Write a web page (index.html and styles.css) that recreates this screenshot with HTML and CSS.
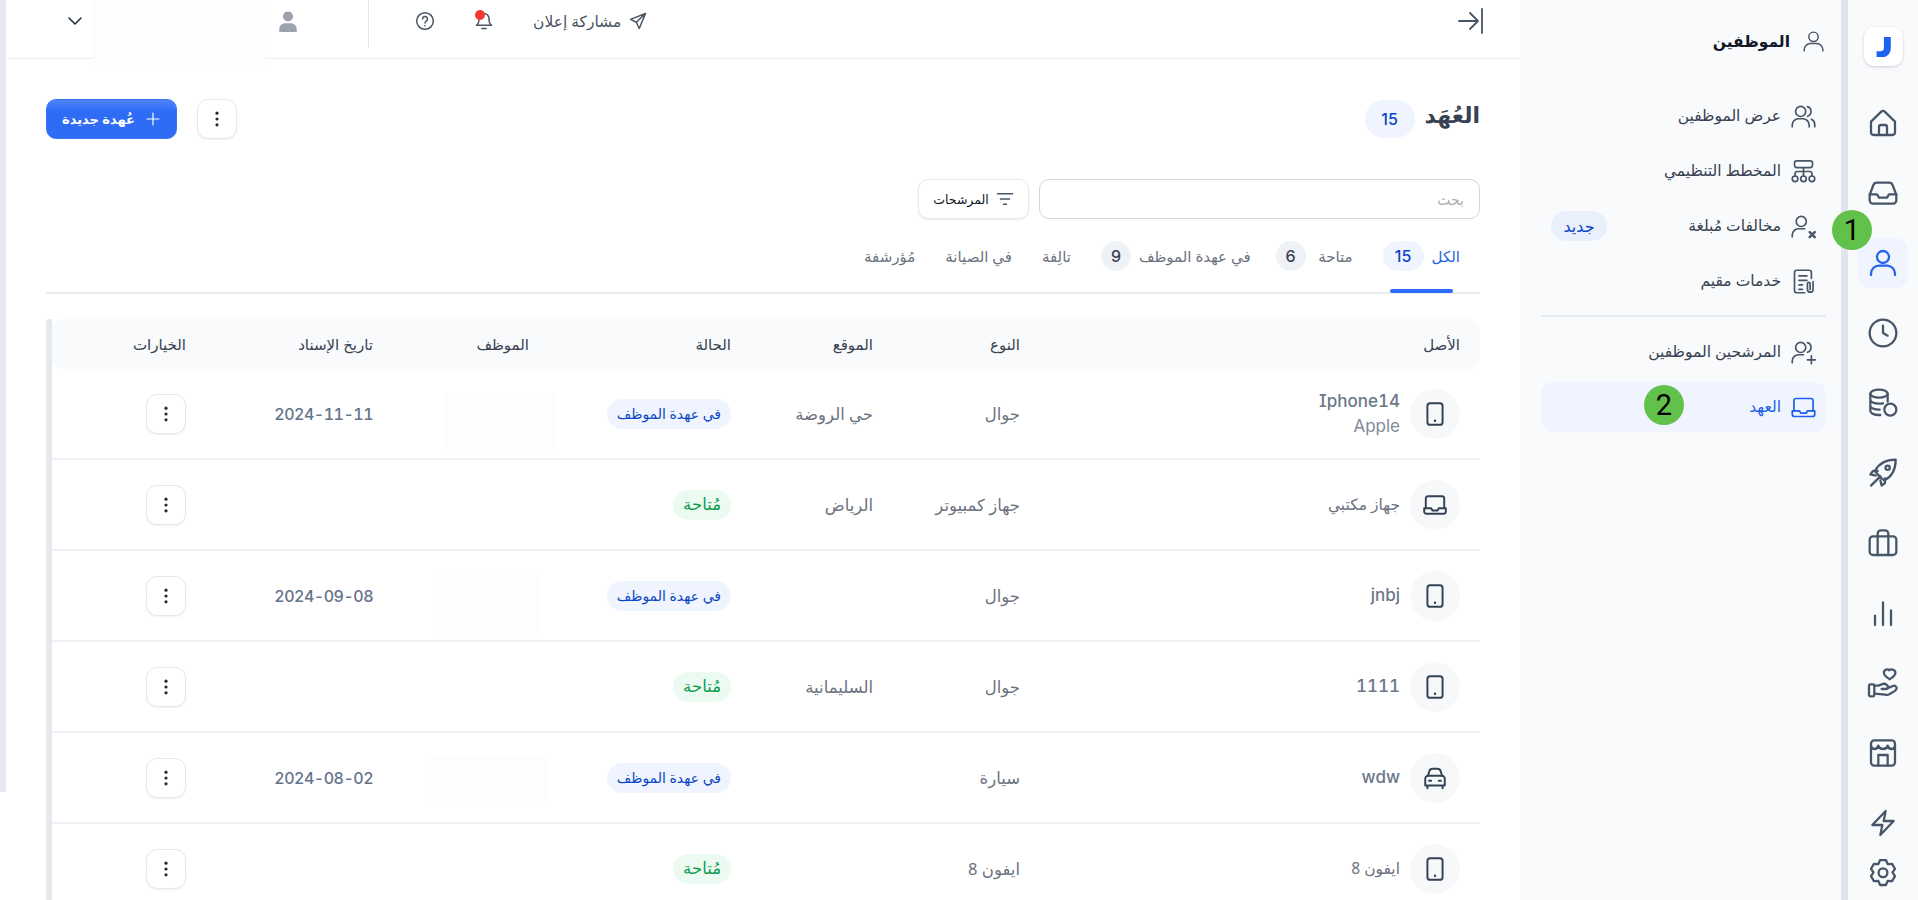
FILE: index.html
```html
<!DOCTYPE html>
<html lang="ar" dir="rtl">
<head>
<meta charset="utf-8">
<title>العهد</title>
<link rel="stylesheet" href="styles.css">
</head>
<body>
<svg class="sprite" xmlns="http://www.w3.org/2000/svg">
  <symbol id="i-user" viewBox="0 0 24 24"><circle cx="12" cy="7.5" r="4.5"/><path d="M3 21v-1a6 6 0 0 1 6-6h6a6 6 0 0 1 6 6v1"/></symbol>
  <symbol id="i-users" viewBox="0 0 24 24"><circle cx="9.5" cy="7.5" r="4.5"/><path d="M2 21v-1.500a5.500 5.500 0 0 1 5.500-5.500h4a5.500 5.500 0 0 1 5.500 5.500V21M15.500 3.200a4.500 4.500 0 0 1 0 8.600M19 14.500a5 5 0 0 1 3 4.500v2"/></symbol>
  <symbol id="i-org" viewBox="0 0 24 24"><rect x="4" y="2.500" width="16" height="6" rx="2"/><path d="M12 8.500v7M4.500 16v-2a2 2 0 0 1 2-2h11a2 2 0 0 1 2 2v2"/><circle cx="4.500" cy="18.500" r="2.500"/><circle cx="12" cy="18.500" r="2.500"/><circle cx="19.500" cy="18.500" r="2.500"/></symbol>
  <symbol id="i-userx" viewBox="0 0 24 24"><circle cx="10" cy="7.500" r="4.500"/><path d="M2 21v-1.500a5.500 5.500 0 0 1 5.500-5.500h5.500"/><path d="M17.500 17l4.500 4.500M22 17l-4.500 4.500" stroke-width="2.200"/></symbol>
  <symbol id="i-userp" viewBox="0 0 24 24"><circle cx="9.500" cy="7.500" r="4.500"/><path d="M2 21v-1.500a5.500 5.500 0 0 1 5.500-5.500h4.500M15.500 3.200a4.500 4.500 0 0 1 0 8.600M19 15v7M15.500 18.500h7"/></symbol>
  <symbol id="i-doc" viewBox="0 0 24 24"><path d="M13 22H6a2 2 0 0 1-2-2V4a2 2 0 0 1 2-2h11a2 2 0 0 1 2 2v5M8 7h7M8 11h7M8 15h3M8 19h3"/><path d="M20.500 12v7a2.500 2.500 0 0 1-5 0v-5a1.200 1.200 0 0 1 2.400 0v5"/></symbol>
  <symbol id="i-laptop" viewBox="0 0 24 24"><path d="M3.500 15V6a2 2 0 0 1 2-2h13a2 2 0 0 1 2 2v9"/><path d="M2 15h6.500l1 2h5l1-2H22v3a2 2 0 0 1-2 2H4a2 2 0 0 1-2-2z"/></symbol>
  <symbol id="i-home" viewBox="0 0 24 24"><path d="M3 11l7.700-7.500a1.900 1.900 0 0 1 2.600 0L21 11v8a2 2 0 0 1-2 2H5a2 2 0 0 1-2-2z"/><path d="M9 21v-6a1.500 1.500 0 0 1 1.500-1.500h3A1.500 1.500 0 0 1 15 15v6"/></symbol>
  <symbol id="i-inbox" viewBox="0 0 24 24"><path d="M2 13.500l2.700-7.300A3 3 0 0 1 7.500 4.200h9a3 3 0 0 1 2.800 2l2.700 7.300v4a2.500 2.500 0 0 1-2.500 2.500h-15A2.500 2.500 0 0 1 2 17.500z"/><path d="M2 13h5.500l1.500 2.500h6l1.500-2.500H22"/></symbol>
  <symbol id="i-clock" viewBox="0 0 24 24"><circle cx="12" cy="12" r="10"/><path d="M12 6.500V12l3.500 2"/></symbol>
  <symbol id="i-coins" viewBox="0 0 24 24"><ellipse cx="9" cy="5" rx="6.500" ry="3"/><path d="M2.500 5v13c0 1.700 2.900 3 6.500 3h1M15.500 5v6M2.500 9.500c0 1.700 2.900 3 6.500 3 1 0 2-.1 3-.3M2.500 14c0 1.700 2.900 3 6.500 3h.5"/><circle cx="17.500" cy="17" r="4.500"/></symbol>
  <symbol id="i-rocket" viewBox="0 0 24 24"><path d="M7.500 12.500L6 10.500c3-6 8-8.500 15.500-8.500 0 7.500-2.500 12.500-8.500 15.500l-2-1.500z"/><path d="M8 10.500H4.500L2.500 13l4 1M13.500 16v3.500L11 21.500l-1-4M3 21.500l7-7"/><circle cx="15.500" cy="8" r="1.600"/></symbol>
  <symbol id="i-case" viewBox="0 0 24 24"><rect x="2" y="7" width="20" height="14" rx="2.500"/><path d="M8 7V5a2.500 2.500 0 0 1 2.500-2.500h3A2.500 2.500 0 0 1 16 5v2M8 7v14M16 7v14"/></symbol>
  <symbol id="i-chart" viewBox="0 0 24 24"><path d="M6 21v-7M12 21V4M18 21V10"/></symbol>
  <symbol id="i-hand" viewBox="0 0 24 24"><path d="M16.500 2.500c1-1.200 4.800-.9 4.800 2 0 2-2.500 3.500-4.300 4.700-1.800-1.200-4.300-2.700-4.300-4.700 0-2.900 2.800-3.200 3.800-2z"/><rect x="1.500" y="13" width="4" height="9" rx="1"/><path d="M5.500 14h3l3.500-1.300c1-.3 2 0 2.700.7l1 1c.7 1-.2 2.200-1.300 2.100H11M15 16l4.500-1.800c1.500-.6 3 .7 2.700 2-.2.900-.7 1.400-1.500 1.900l-4 2.300c-1 .5-2 .6-3 .3L5.500 20"/></symbol>
  <symbol id="i-store" viewBox="0 0 24 24"><rect x="3" y="2.500" width="18" height="19" rx="2.500"/><path d="M3 6.500c.4 1.600 1.200 2.500 2.500 2.500S8.100 8 8.500 6.500C8.900 8 10.200 9 12 9s3.100-1 3.500-2.500c.4 1.500 1.700 2.500 3 2.500s2.100-.9 2.500-2.500M8.500 21.500V13.500h7v8"/></symbol>
  <symbol id="i-bolt" viewBox="0 0 24 24"><path d="M14 3L4 13.500h7.500L10 21l10-10.500h-7.500z"/></symbol>
  <symbol id="i-gear" viewBox="0 0 24 24"><path d="M9.800 2.300h4.400l1.300 3 3.300-.2 2.200 3.800-1.900 2.700 1.900 2.700-2.200 3.800-3.300-.2-1.300 3.100H9.800l-1.300-3.100-3.300.2L3 14.300 4.900 11.600 3 8.900l2.200-3.800 3.300.2z"/><circle cx="12" cy="11.800" r="3.300"/></symbol>
  <symbol id="i-phone" viewBox="0 0 24 24"><rect x="5" y="2" width="14" height="20" rx="2.500"/><path d="M12 18.200v.1" stroke-width="2.200"/></symbol>
  <symbol id="i-car" viewBox="0 0 24 24"><path d="M5.500 10l1.300-4.500A3 3 0 0 1 9.600 3.500h4.800a3 3 0 0 1 2.800 2L18.500 10"/><path d="M3 12.500A2.500 2.500 0 0 1 5.500 10h13a2.500 2.500 0 0 1 2.500 2.500V19H3zM5 19v2.500M19 19v2.500M6.500 14.500h2M15.500 14.500h2"/></symbol>
  <symbol id="i-dots" viewBox="0 0 24 24"><circle cx="12" cy="5" r="1.900"/><circle cx="12" cy="12" r="1.900"/><circle cx="12" cy="19" r="1.900"/></symbol>
</svg>

<div class="page">
  <nav class="rail">
    <div class="logo"><svg viewBox="0 0 24 24" class="logo-j"><path d="M13 1h7.500v12c0 5.500-3.500 10-9 10H5v-6.500h4c3 0 4-1.500 4-4z"/></svg></div>
    <ul class="rail-list">
      <li class="rail-item"><svg class="ico"><use href="#i-home"/></svg></li>
      <li class="rail-item"><svg class="ico"><use href="#i-inbox"/></svg></li>
      <li class="rail-item is-active"><svg class="ico"><use href="#i-user"/></svg></li>
      <li class="rail-item"><svg class="ico"><use href="#i-clock"/></svg></li>
      <li class="rail-item"><svg class="ico"><use href="#i-coins"/></svg></li>
      <li class="rail-item"><svg class="ico"><use href="#i-rocket"/></svg></li>
      <li class="rail-item"><svg class="ico"><use href="#i-case"/></svg></li>
      <li class="rail-item"><svg class="ico"><use href="#i-chart"/></svg></li>
      <li class="rail-item"><svg class="ico"><use href="#i-hand"/></svg></li>
      <li class="rail-item"><svg class="ico"><use href="#i-store"/></svg></li>
      <li class="rail-item"><svg class="ico"><use href="#i-bolt"/></svg></li>
      <li class="rail-item rail-last"><svg class="ico"><use href="#i-gear"/></svg></li>
    </ul>
  </nav>

  <aside class="side">
    <div class="side-title"><svg class="ico-t"><use href="#i-user"/></svg><span>الموظفين</span></div>
    <ul class="side-list">
      <li class="side-item"><svg class="ico-s"><use href="#i-users"/></svg><span>عرض الموظفين</span></li>
      <li class="side-item"><svg class="ico-s"><use href="#i-org"/></svg><span>المخطط التنظيمي</span></li>
      <li class="side-item"><svg class="ico-s"><use href="#i-userx"/></svg><span>مخالفات مُبلغة</span><em class="tag-new">جديد</em></li>
      <li class="side-item"><svg class="ico-s"><use href="#i-doc"/></svg><span>خدمات مقيم</span></li>
    </ul>
    <hr class="side-sep">
    <ul class="side-list">
      <li class="side-item"><svg class="ico-s"><use href="#i-userp"/></svg><span>المرشحين الموظفين</span></li>
      <li class="side-item is-active"><svg class="ico-s"><use href="#i-laptop"/></svg><span>العهد</span></li>
    </ul>
  </aside>

  <main class="main">
    <header class="topbar">
      <svg class="collapse" viewBox="0 0 26 26"><path d="M24 1v24M1 13h18M12 5l8 8-8 8"/></svg>
      <div class="top-tools">
        <div class="share">
          <svg class="ico-share" viewBox="0 0 24 24"><path d="M21 3L3 10l7 3.500L13.500 21zM21 3L10 13.500"/></svg>
          <span>مشاركة إعلان</span>
        </div>
        <div class="bell">
          <svg class="ico-bell" viewBox="0 0 24 24"><path d="M12 3a6 6 0 0 1 6 6c0 5 1 7 3 8H3c2-1 3-3 3-8a6 6 0 0 1 6-6zM9.500 21h5"/></svg>
          <i class="bell-dot"></i>
        </div>
        <svg class="ico-help" viewBox="0 0 24 24"><circle cx="12" cy="12" r="10"/><path d="M9 9.500a3 3 0 1 1 4.500 2.600c-1 .6-1.500 1.200-1.500 2.400M12 17.500v.2"/></svg>
        <i class="top-sep"></i>
        <svg class="ico-person" viewBox="0 0 24 24"><circle cx="12" cy="7" r="5.500"/><path d="M2.500 24v-3c0-4 3-6.500 6.500-6.500h6c3.500 0 6.500 2.500 6.500 6.500v3z"/></svg>
        <div class="mask-top"></div>
        <svg class="ico-chev" viewBox="0 0 24 24"><path d="M4 8l8 8 8-8"/></svg>
      </div>
    </header>

    <section class="content">
      <div class="head-row">
        <div class="head-title"><h1>العُهَد</h1><b class="count">15</b></div>
        <div class="head-actions">
          <button class="btn-icon"><svg class="ico-dots"><use href="#i-dots"/></svg></button>
          <button class="btn-primary"><svg class="ico-plus" viewBox="0 0 24 24"><path d="M12 3v18M3 12h18"/></svg><span>عُهدة جديدة</span></button>
        </div>
      </div>

      <div class="toolbar">
        <input class="search" type="text" placeholder="بحث">
        <button class="btn-filter"><svg class="ico-filter" viewBox="0 0 24 24"><path d="M2 5h20M6 12h12M10 19h4"/></svg><span>المرشحات</span></button>
      </div>

      <div class="tabs">
        <div class="tab is-active"><span>الكل</span><b class="tab-n">15</b></div>
        <div class="tab tab-avail"><span>متاحة</span><b class="tab-n">6</b></div>
        <div class="tab tab-held"><span>في عهدة الموظف</span><b class="tab-n">9</b></div>
        <div class="tab"><span>تالِفة</span></div>
        <div class="tab"><span>في الصيانة</span></div>
        <div class="tab"><span>مُؤرشفة</span></div>
      </div>

      <div class="table">
        <div class="row row-head">
          <div>الأصل</div><div>النوع</div><div>الموقع</div><div>الحالة</div><div>الموظف</div><div>تاريخ الإسناد</div><div>الخيارات</div>
        </div>

        <div class="row">
          <div class="asset"><span class="asset-ico"><svg class="ico-a"><use href="#i-phone"/></svg></span><span class="asset-txt"><b class="latin">Iphone14</b><small class="latin">Apple</small></span></div>
          <div>جوال</div><div>حي الروضة</div>
          <div><span class="pill pill-blue">في عهدة الموظف</span></div>
          <div class="emp"><i class="mask mask-1"></i></div>
          <div class="date">2024-11-11</div>
          <div><button class="btn-icon"><svg class="ico-dots"><use href="#i-dots"/></svg></button></div>
        </div>

        <div class="row">
          <div class="asset"><span class="asset-ico"><svg class="ico-a"><use href="#i-laptop"/></svg></span><span class="asset-txt"><b>جهاز مكتبي</b></span></div>
          <div>جهاز كمبيوتر</div><div>الرياض</div>
          <div><span class="pill pill-green">مُتاحة</span></div>
          <div class="emp"></div>
          <div class="date"></div>
          <div><button class="btn-icon"><svg class="ico-dots"><use href="#i-dots"/></svg></button></div>
        </div>

        <div class="row">
          <div class="asset"><span class="asset-ico"><svg class="ico-a"><use href="#i-phone"/></svg></span><span class="asset-txt"><b class="latin">jnbj</b></span></div>
          <div>جوال</div><div></div>
          <div><span class="pill pill-blue">في عهدة الموظف</span></div>
          <div class="emp"><i class="mask mask-2"></i></div>
          <div class="date">2024-09-08</div>
          <div><button class="btn-icon"><svg class="ico-dots"><use href="#i-dots"/></svg></button></div>
        </div>

        <div class="row">
          <div class="asset"><span class="asset-ico"><svg class="ico-a"><use href="#i-phone"/></svg></span><span class="asset-txt"><b class="latin">1111</b></span></div>
          <div>جوال</div><div>السليمانية</div>
          <div><span class="pill pill-green">مُتاحة</span></div>
          <div class="emp"></div>
          <div class="date"></div>
          <div><button class="btn-icon"><svg class="ico-dots"><use href="#i-dots"/></svg></button></div>
        </div>

        <div class="row">
          <div class="asset"><span class="asset-ico"><svg class="ico-a"><use href="#i-car"/></svg></span><span class="asset-txt"><b class="latin">wdw</b></span></div>
          <div>سيارة</div><div></div>
          <div><span class="pill pill-blue">في عهدة الموظف</span></div>
          <div class="emp"><i class="mask mask-3"></i></div>
          <div class="date">2024-08-02</div>
          <div><button class="btn-icon"><svg class="ico-dots"><use href="#i-dots"/></svg></button></div>
        </div>

        <div class="row">
          <div class="asset"><span class="asset-ico"><svg class="ico-a"><use href="#i-phone"/></svg></span><span class="asset-txt"><b>ايفون 8</b></span></div>
          <div>ايفون 8</div><div></div>
          <div><span class="pill pill-green">مُتاحة</span></div>
          <div class="emp"></div>
          <div class="date"></div>
          <div><button class="btn-icon"><svg class="ico-dots"><use href="#i-dots"/></svg></button></div>
        </div>
      </div>
    </section>
  </main>

  <div class="edge"></div>
</div>

<i class="marker marker-1">1</i>
<i class="marker marker-2">2</i>
</body>
</html>
```

FILE: styles.css
```css
* { box-sizing: border-box; }
html, body { margin: 0; height: 100%; overflow: hidden; background: #fff; }
body { font-family: "Noto Sans", "DejaVu Sans", sans-serif; color: #4b5563; font-size: 14px; position: relative; }
ul { list-style: none; margin: 0; padding: 0; }
button { font: inherit; cursor: pointer; }
.sprite { position: absolute; width: 0; height: 0; }
svg { fill: none; stroke: currentColor; stroke-width: 1.8; stroke-linecap: round; stroke-linejoin: round; display: block; flex: none; }

.page { display: flex; height: 900px; width: 1918px; overflow: hidden; }

/* annotation markers */
.marker { position: absolute; width: 40px; height: 40px; border-radius: 50%; background: #62c14a; color: #000; font: normal 29px/40px "Roboto", sans-serif; text-align: center; }
.marker-1 { left: 1832px; top: 210px; }
.marker-2 { left: 1644px; top: 385px; }

/* rail */
.rail { width: 70px; flex: none; background: #f9fafc; padding-top: 27px; display: flex; flex-direction: column; align-items: center; }
.logo { width: 39px; height: 39px; border-radius: 10px; background: #fff; box-shadow: 0 1px 3px rgba(30,41,59,.2); display: flex; align-items: center; justify-content: center; margin-bottom: 32px; }
.logo-j { width: 22px; height: 22px; fill: #1e62f0; stroke: none; }
.rail-list { display: flex; flex-direction: column; gap: 20px; }
.rail-item { width: 50px; height: 50px; border-radius: 12px; display: flex; align-items: center; justify-content: center; color: #475569; }
.rail-item .ico { width: 32px; height: 32px; stroke-width: 1.7; }
.rail-item.is-active { background: #eff4fe; color: #2563eb; }
.rail-last { margin-top: -20px; }

/* secondary sidebar */
.side { width: 328px; flex: none; background: #f9fafc; border-right: 7px solid #e0e4ec; padding: 16px 15px 0 21px; }
.side-title { height: 50px; display: flex; align-items: center; gap: 11px; color: #111827; font-size: 15.5px; font-weight: 700; }
.side-title { margin-bottom: 25px; }
.ico-t { width: 25px; height: 25px; color: #475569; stroke-width: 1.4; }
.side-list { display: flex; flex-direction: column; gap: 5px; }
.side-item { height: 50px; display: flex; align-items: center; gap: 9px; padding-right: 9px; border-radius: 12px; color: #374151; font-size: 15.5px; position: relative; }
.side-item > span { position: relative; top: -1px; }
.ico-s { width: 27px; height: 27px; color: #475569; stroke-width: 1.5; }
.side-item.is-active { background: #eff4fe; color: #1d5fe8; }
.side-item.is-active .ico-s { color: #1d5fe8; }
.tag-new { position: absolute; left: 10px; top: 10px; width: 56px; height: 30px; border-radius: 15px; background: #eaf0fb; color: #0b47c4; font-style: normal; font-size: 16px; display: flex; align-items: center; justify-content: center; }
.side-sep { border: 0; height: 2px; background: #e6eaf0; margin: 9px 0 10px; }

/* main */
.main { width: 1514px; flex: none; background: #fff; overflow: hidden; }
.edge { width: 6px; height: 792px; flex: none; background: #e5e9ee; }

.topbar { height: 59px; border-bottom: 1px solid #eceef1; display: flex; justify-content: space-between; align-items: flex-start; padding: 8px 36px 0 0; }
.collapse { width: 26px; height: 26px; color: #475569; stroke-width: 1.8; }
.top-tools { display: flex; align-items: center; height: 26px; padding-left: 60px; color: #4b5563; }
.share { display: flex; align-items: center; gap: 7px; font-size: 15.5px; }
.ico-share { width: 20px; height: 20px; }
.bell { position: relative; margin-right: 39px; width: 20px; height: 20px; }
.ico-bell { width: 20px; height: 20px; }
.bell-dot { position: absolute; top: -1px; right: 9px; width: 10px; height: 10px; border-radius: 50%; background: #f23b30; }
.ico-help { width: 20px; height: 20px; margin-right: 39px; }
.top-sep { width: 1px; height: 48px; background: #e3e5e8; margin: -8px 46px 0 69px; align-self: flex-start; }
.ico-person { width: 22px; height: 24px; margin-left: 11px; color: #9ca3af; fill: #9ca3af; stroke: none; }
.mask-top { width: 173px; height: 69px; background: #fdfdfd; margin-left: 9px; align-self: flex-start; margin-top: -7px; position: relative; }
.ico-chev { width: 18px; height: 18px; color: #1f2937; stroke-width: 2; }

.content { padding: 40px 40px 0; }
.head-row { display: flex; justify-content: space-between; align-items: center; height: 40px; }
.head-title { display: flex; align-items: center; gap: 10px; }
.head-title h1 { margin: 0 0 10px; font-size: 22px; font-weight: 700; color: #374151; }
.count { width: 50px; height: 38px; border-radius: 19px; background: #eff4fe; color: #0b47c4; font-weight: 500; font-size: 16px; display: flex; align-items: center; justify-content: center; font-family: "Inter", sans-serif; }
.head-actions { display: flex; gap: 20px; align-items: center; }
.btn-icon { width: 40px; height: 40px; padding: 0; border-radius: 11px; border: 1px solid #e3e8f2; background: #fff; box-shadow: 0 1px 2px rgba(16,24,40,.06); display: flex; align-items: center; justify-content: center; color: #1f2937; }
.ico-dots { width: 20px; height: 20px; fill: currentColor; stroke: none; }
.btn-primary { width: 131px; height: 40px; border-radius: 10px; border: 1px solid #3a74f5; background: linear-gradient(#4f84ff, #2f6cf6 30%); color: #fff; display: flex; align-items: center; justify-content: center; gap: 10px; font-size: 13px; font-weight: 700; padding: 0; }
.ico-plus { width: 16px; height: 16px; stroke-width: 1.8; }

.toolbar { display: flex; gap: 10px; margin-top: 40px; }
.search { width: 441px; height: 40px; border: 1px solid #d1d5db; border-radius: 10px; background: #fff; padding: 0 15px; font: inherit; font-size: 14px; color: #4b5563; outline: none; }
.search::placeholder { color: #a9adb5; }
.btn-filter { width: 111px; height: 40px; border-radius: 10px; border: 1px solid #e5e7eb; background: #fff; box-shadow: 0 1px 2px rgba(16,24,40,.08); display: flex; align-items: center; justify-content: center; gap: 7px; color: #111827; font-size: 12.5px; padding: 0; }
.ico-filter { width: 18px; height: 18px; color: #475569; stroke-width: 2; }

.tabs { height: 75px; border-bottom: 2px solid #e9ebef; display: flex; gap: 30px; padding-right: 20px; align-items: flex-start; padding-top: 22px; margin-bottom: 25px; }
.tab { display: flex; align-items: center; gap: 8px; height: 30px; color: #6b7280; font-size: 15px; position: relative; }
.tab.is-active { color: #1d5fe8; }
.tab.is-active::after { content: ""; position: absolute; left: 7px; right: 7px; top: 48px; height: 4px; border-radius: 2px; background: #2f6cf6; }
.tab-avail span { min-width: 39px; }
.tab-held { margin-right: -5px; }
.tab-n { min-width: 30px; height: 30px; padding: 0 5px; border-radius: 15px; background: #eef1f6; color: #374151; font-weight: 500; font-size: 16px; display: flex; align-items: center; justify-content: center; font-family: "Inter", sans-serif; }
.tab.is-active .tab-n { background: #eff4fe; color: #0b47c4; width: 41px; }

.table { border-left: 6px solid #e5e9ee; border-top-left-radius: 4px; }
.row { display: grid; grid-template-columns: 440px 147px 142px 202px 156px 187px 134px; height: 91px; padding-right: 20px; align-items: center; border-bottom: 2px solid #eef0f3; color: #6b7280; font-size: 16.5px; }
.row-head { height: 50px; background: #f9fafc; border: 0; border-radius: 12px; color: #374151; font-size: 15px; }
.asset { display: flex; align-items: center; gap: 10px; }
.asset-ico { width: 50px; height: 50px; border-radius: 50%; background: #f7f8fa; color: #334155; display: flex; align-items: center; justify-content: center; }
.ico-a { width: 26px; height: 26px; }
.asset-txt { display: flex; flex-direction: column; line-height: 25px; font-size: 15.5px; }
.asset-txt b { font-weight: 400; color: #6b7280; }
.latin { font-family: "Inter", sans-serif; font-size: 17px; font-variant-numeric: tabular-nums; font-feature-settings: "cv08", "tnum"; }
.asset-txt b.latin { font-weight: 500; color: #6b7789; }
.asset-txt small.latin { color: #808a99; }
.pill { display: inline-flex; align-items: center; height: 30px; padding: 0 10px; border-radius: 15px; font-size: 14px; }
.pill-blue { background: #eff4fe; color: #0b47c4; }
.pill-green { background: #ecfbf1; color: #0d9a4e; font-size: 16.5px; padding-bottom: 3px; }
.emp { position: relative; height: 100%; }
.mask { position: absolute; background: #fdfdfd; }
.mask-1 { right: -28px; top: 23px; width: 112px; height: 57px; }
.mask-2 { right: -10px; top: 23px; width: 106px; height: 60px; }
.mask-3 { right: -18px; top: 23px; width: 117px; height: 46px; }
.date { font-family: "Inter", sans-serif; font-weight: 500; font-size: 16px; letter-spacing: -.5px; font-variant-numeric: tabular-nums; color: #64748b; }
```
